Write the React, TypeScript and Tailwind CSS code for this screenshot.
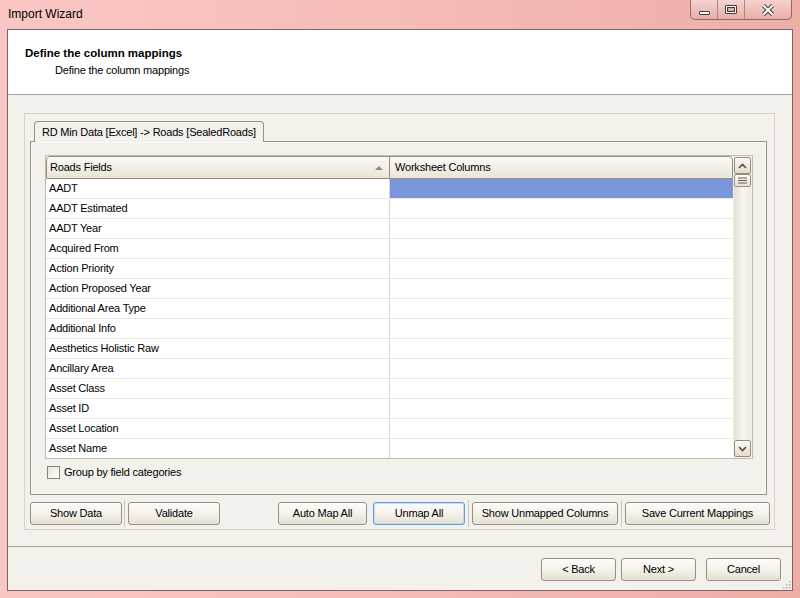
import type { ReactNode } from "react";

const FIELDS = [
  "AADT",
  "AADT Estimated",
  "AADT Year",
  "Acquired From",
  "Action Priority",
  "Action Proposed Year",
  "Additional Area Type",
  "Additional Info",
  "Aesthetics Holistic Raw",
  "Ancillary Area",
  "Asset Class",
  "Asset ID",
  "Asset Location",
  "Asset Name",
];

function CaptionButtons() {
  return (
    <div className="flex h-[20px] overflow-hidden rounded-b-[5px] border border-t-0 border-[#8f6b68] bg-gradient-to-b from-[#f6d4d0] to-[#e8ada6]">
      <div className="flex w-[27px] items-end justify-center border-r border-[#a98480] pb-[4px]">
        <div className="h-[4px] w-[11px] rounded-[1px] border border-[#3b3b3b] bg-white" />
      </div>
      <div className="flex w-[27px] items-center justify-center border-r border-[#a98480]">
        <div className="h-[9px] w-[12px] rounded-[1px] border border-[#3b3b3b] bg-white p-[1px]">
          <div className="h-full w-full border border-[#3b3b3b] bg-[#e6aaa2]" />
        </div>
      </div>
      <div className="flex w-[46px] items-center justify-center">
        <svg width="14" height="12" viewBox="0 0 14 12">
          <path d="M2.5 1.5 L11.5 10.5 M11.5 1.5 L2.5 10.5" stroke="#3b3b3b" strokeWidth="4" />
          <path d="M2.5 1.5 L11.5 10.5 M11.5 1.5 L2.5 10.5" stroke="#ffffff" strokeWidth="2" />
        </svg>
      </div>
    </div>
  );
}

function Button({
  children,
  className = "",
  focused = false,
}: {
  children: ReactNode;
  className?: string;
  focused?: boolean;
}) {
  return (
    <button
      type="button"
      className={`h-[23px] shrink-0 rounded-[3px] border bg-gradient-to-b from-[#fdfcfa] via-[#f5f2eb] to-[#e6dfd2] text-[11px] leading-none text-black ${
        focused
          ? "border-[#5f9ce0] shadow-[inset_0_0_0_1px_#c2dcf6]"
          : "border-[#9d8f80]"
      } ${className}`}
    >
      {children}
    </button>
  );
}

function Chevron({ up }: { up?: boolean }) {
  return (
    <svg width="9" height="6" viewBox="0 0 9 6">
      <path
        d={up ? "M1 5 L4.5 1.5 L8 5" : "M1 1 L4.5 4.5 L8 1"}
        fill="none"
        stroke="#5b4c3e"
        strokeWidth="1.6"
      />
    </svg>
  );
}

function ScrollButton({ up }: { up?: boolean }) {
  return (
    <div className="flex h-[17px] w-[17px] items-center justify-center rounded-[2px] border border-[#9c8c7c] bg-gradient-to-b from-[#fbf9f5] to-[#e4dccd]">
      <Chevron up={up} />
    </div>
  );
}

function Grid() {
  return (
    <div className="flex h-[304px] border border-[#c2bbb0] bg-white">
      <div className="flex w-[687px] flex-col overflow-hidden">
        <div className="flex h-[23px] shrink-0 rounded-t-[4px] border border-[#9d8c7a] bg-gradient-to-b from-[#fbfaf6] to-[#ebe5d8]">
          <div className="flex w-[343px] items-center justify-between border-r border-[#9d8c7a] pl-[3px] pr-[6px]">
            <span>Roads Fields</span>
            <span className="h-0 w-0 border-x-[4px] border-b-[4px] border-x-transparent border-b-[#8e8a85]" />
          </div>
          <div className="flex flex-1 items-center pl-[5px]">Worksheet Columns</div>
        </div>
        {FIELDS.map((f, i) => (
          <div key={f} className="flex h-[20px] shrink-0 border-b border-[#ece7dd]">
            <div className="flex w-[344px] items-center border-r border-[#ddd8ce] pl-[3px]">{f}</div>
            <div className={`flex-1 ${i === 0 ? "bg-[#7b97dc]" : ""}`} />
          </div>
        ))}
      </div>
      <div className="flex w-[19px] flex-col bg-[#f3f1ec] pl-[1px] pt-[1px]">
        <ScrollButton up />
        <div className="flex h-[13px] w-[17px] items-center justify-center rounded-[2px] border border-[#9c8c7c] bg-gradient-to-b from-[#fbf9f5] to-[#e9e2d5]">
          <svg width="9" height="7" viewBox="0 0 9 7">
            <path d="M0 1 H9 M0 3.5 H9 M0 6 H9" stroke="#6b5c4e" strokeWidth="1" />
          </svg>
        </div>
        <div className="w-[17px] flex-1 bg-gradient-to-r from-[#e6dfd1] via-[#f8f6f1] to-[#efebe3]" />
        <ScrollButton />
        <div className="h-[1px]" />
      </div>
    </div>
  );
}

export default function App() {
  return (
    <div className="flex h-[598px] w-[800px] flex-col overflow-hidden bg-gradient-to-r from-[#fac7c5] via-[#f6bcb8] to-[#eeaea8] font-['Liberation_Sans',Arial,sans-serif] text-[11px] tracking-[-0.2px] text-black">
      <div className="flex h-[29px] shrink-0 items-start justify-between px-[8px]">
        <div className="pt-[7px] text-[12px] leading-[15px] tracking-normal">Import Wizard</div>
        <CaptionButtons />
      </div>

      <div className="mx-[7px] mb-[7px] flex flex-1 flex-col border border-[#7d6565] bg-[#f3f1ec]">
        <div className="h-[65px] shrink-0 border-b border-[#a8a196] bg-white pl-[17px] pt-[16px]">
          <div className="text-[11.5px] font-bold leading-[14px] tracking-normal">Define the column mappings</div>
          <div className="mt-[3px] pl-[30px] leading-[14px]">Define the column mappings</div>
        </div>

        <div className="flex-1 pb-[16px] pl-[16px] pr-[17px] pt-[18px]">
          <div className="flex h-full flex-col border border-[#d9d4ca] pb-[4px] pt-[7px]">
            <div className="ml-[5px] mr-[7px] flex h-[20px] pl-[4px]">
              <div className="relative z-10 flex h-[21px] items-center rounded-t-[4px] border border-b-0 border-[#9d8e80] bg-[#f3f1ec] px-[7px]">
                RD Min Data [Excel] -&gt; Roads [SealedRoads]
              </div>
            </div>
            <div className="ml-[5px] mr-[7px] h-[354px] border border-[#9d8e80] pl-[14px] pr-[13px] pt-[13px] shadow-[inset_0_0_0_1px_#fbfaf7]">
              <Grid />
              <div className="mt-[5px] flex items-center gap-[4px] pl-[2px]">
                <div className="h-[13px] w-[13px] border border-[#8f8070] bg-gradient-to-br from-[#e9e5dc] to-white" />
                <span>Group by field categories</span>
              </div>
            </div>
            <div className="mt-[7px] flex justify-between pl-[5px] pr-[4px]">
              <div className="flex items-stretch">
                <Button className="w-[92px]">Show Data</Button>
                <div className="mx-[2px] -my-[2px] w-px bg-[#cdc7bc]" />
                <Button className="ml-[1px] w-[92px]">Validate</Button>
              </div>
              <div className="flex items-stretch">
                <Button className="w-[89px]">Auto Map All</Button>
                <Button className="ml-[6px] w-[92px]" focused>
                  Unmap All
                </Button>
                <div className="mx-[3px] -my-[2px] w-px bg-[#cdc7bc]" />
                <Button className="w-[146px]">Show Unmapped Columns</Button>
                <div className="mx-[3px] -my-[2px] w-px bg-[#cdc7bc]" />
                <Button className="w-[145px]">Save Current Mappings</Button>
              </div>
            </div>
          </div>
        </div>

        <div className="relative flex h-[44px] shrink-0 justify-end border-t border-[#a8a196] pr-[11px] pt-[11px]">
          <Button className="w-[75px]">&lt; Back</Button>
          <Button className="ml-[5px] w-[75px]">Next &gt;</Button>
          <Button className="ml-[10px] w-[75px]">Cancel</Button>
          <svg className="absolute bottom-[1px] right-[1px]" width="8" height="8" viewBox="0 0 8 8">
            <g fill="#b9b2a6">
              <rect x="6" y="0" width="1.5" height="1.5" />
              <rect x="3" y="3" width="1.5" height="1.5" />
              <rect x="6" y="3" width="1.5" height="1.5" />
              <rect x="0" y="6" width="1.5" height="1.5" />
              <rect x="3" y="6" width="1.5" height="1.5" />
              <rect x="6" y="6" width="1.5" height="1.5" />
            </g>
          </svg>
        </div>
      </div>
    </div>
  );
}
